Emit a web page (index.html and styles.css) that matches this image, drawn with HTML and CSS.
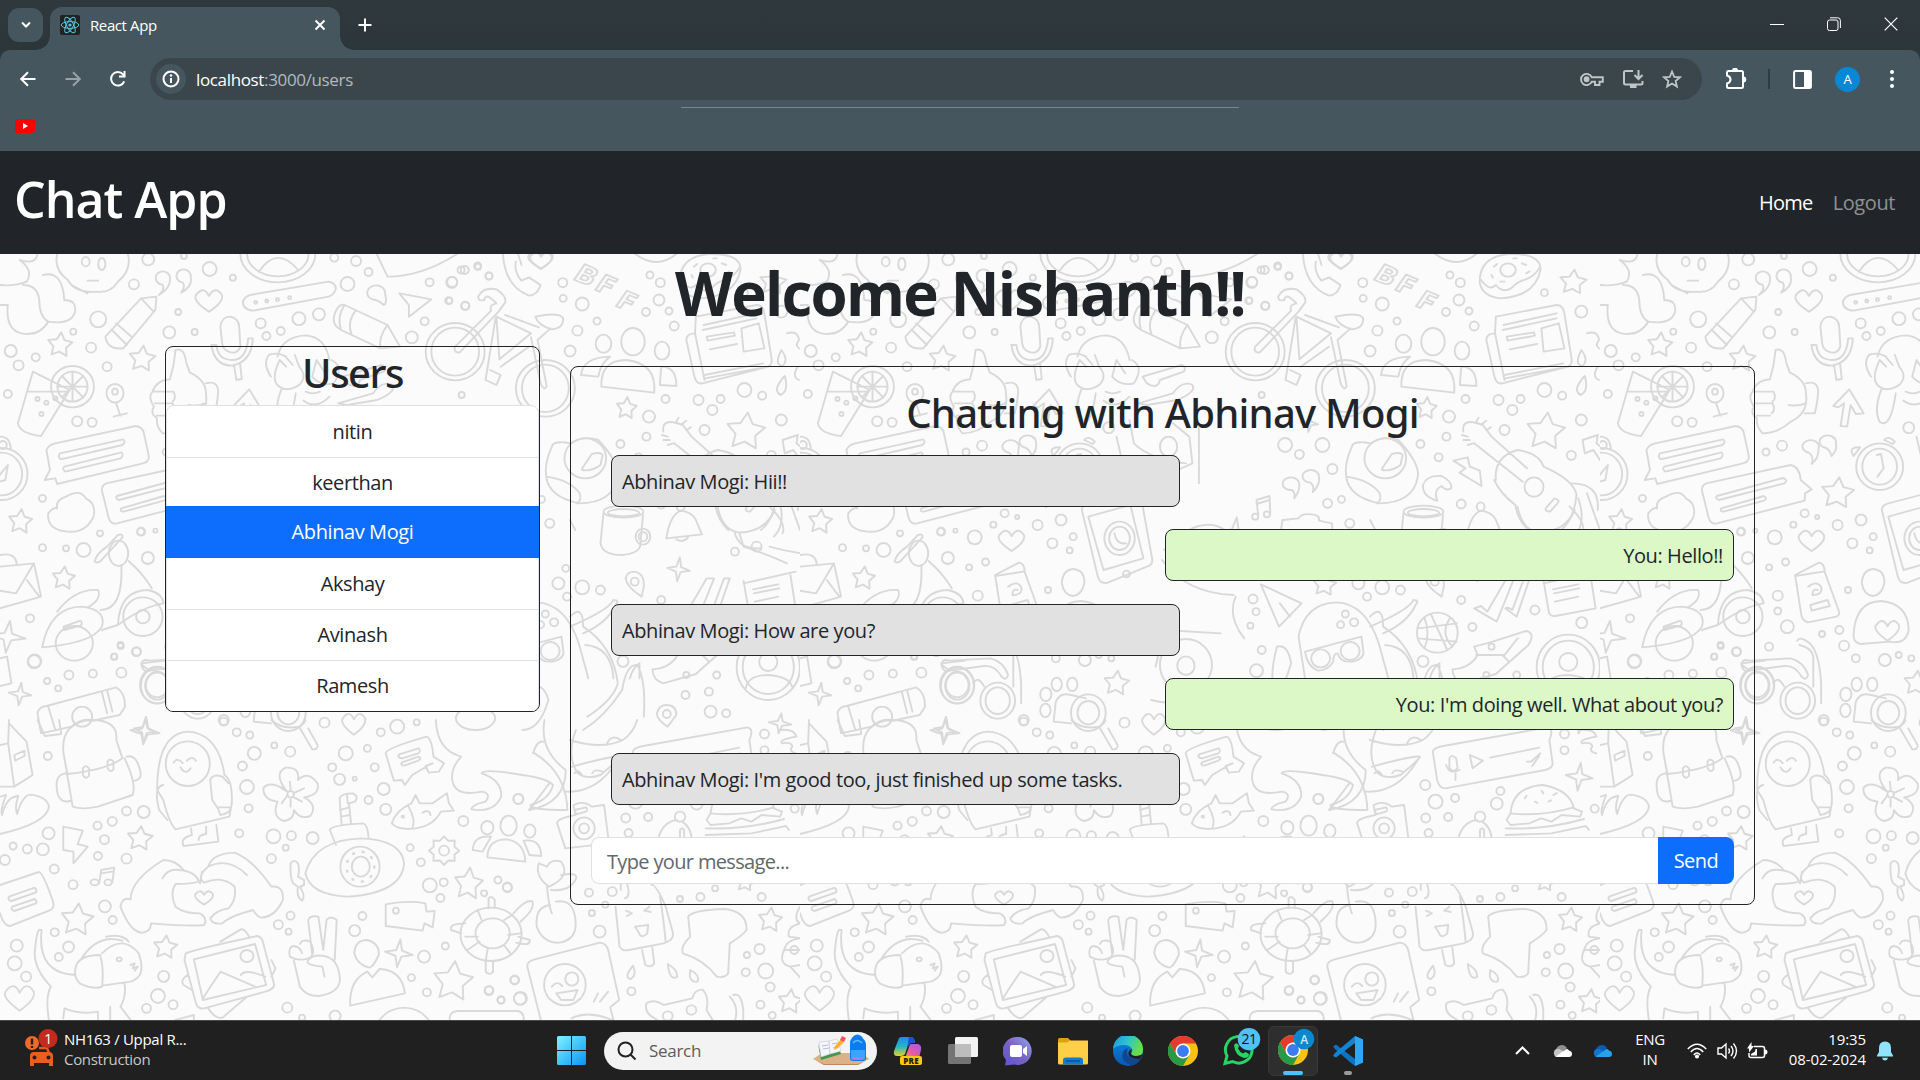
FILE: index.html
```html
<!DOCTYPE html>
<html lang="en">
<head>
<meta charset="utf-8">
<title>React App</title>
<link rel="stylesheet" href="styles.css">
</head>
<body>
<div class="screen">

<header class="chrome">
  <div class="tabstrip">
    <button class="tab-search"><svg width="14" height="10" viewBox="0 0 14 10"><path d="M3 2.5l4 4 4-4" class="w2"/></svg></button>
    <div class="tab">
      <svg class="favicon" width="20" height="20" viewBox="0 0 20 20"><rect width="20" height="20" rx="2" fill="#222"/><g fill="none" stroke="#58c4dc" stroke-width="1"><ellipse cx="10" cy="10" rx="8.8" ry="3.4"/><ellipse cx="10" cy="10" rx="8.8" ry="3.4" transform="rotate(60 10 10)"/><ellipse cx="10" cy="10" rx="8.8" ry="3.4" transform="rotate(120 10 10)"/></g><circle cx="10" cy="10" r="1.6" fill="#58c4dc"/></svg>
      <span class="tab-title">React App</span>
      <svg width="12" height="12" viewBox="0 0 12 12"><path d="M1.5 1.5l9 9M10.500 1.500l-9 9" class="w2"/></svg>
    </div>
    <svg class="newtab" width="14" height="14" viewBox="0 0 14 14"><path d="M7 .5v13M.5 7h13" class="w2"/></svg>
    <div class="winctl">
      <svg width="14" height="14" viewBox="0 0 14 14"><path d="M0 7.500h14" stroke="#fff"/></svg>
      <svg width="14" height="14" viewBox="0 0 14 14" fill="none" stroke="#fff"><rect x=".5" y="3" width="10.500" height="10.500" rx="2"/><path d="M3 .8h7.500a2.700 2.700 0 0 1 2.900 2.700v7.500"/></svg>
      <svg width="14" height="14" viewBox="0 0 14 14"><path d="M.7.7l12.600 12.600M13.300.7L.7 13.300" stroke="#fff" stroke-width="1.200"/></svg>
    </div>
  </div>
  <div class="toolbar">
    <div class="nav">
      <svg width="16" height="16" viewBox="0 0 16 16"><path d="M15.500 8H1.500M8 1.200L1.200 8 8 14.800" class="w2"/></svg>
      <svg class="dim" width="16" height="16" viewBox="0 0 16 16"><path d="M.5 8h14M8 1.200L14.800 8 8 14.800" class="w2"/></svg>
      <svg width="18" height="18" viewBox="0 0 18 18"><path d="M15.200 11.300A6.800 6.800 0 1 1 14 4.300L15.500 6" class="w2"/><path d="M16.500 1v6.500H10l0-2h4.500V1z" fill="#fff"/></svg>
    </div>
    <div class="omnibox">
      <span class="site-info"><svg width="18" height="18" viewBox="0 0 18 18"><circle cx="9" cy="9" r="7.500" class="w2"/><path d="M9 8v5" class="w2"/><circle cx="9" cy="5.500" r="1.200" fill="#fff"/></svg></span>
      <span class="url">localhost<i>:3000/users</i></span>
      <div class="omni-icons">
        <svg width="24" height="18" viewBox="0 0 24 18" fill="none" stroke="#c0c5c8" stroke-width="1.900"><path d="M11.800 7.300A5.600 5.600 0 1 0 11.800 11.700H15v3.300h4.500V11.700H22.800V7.300z"/><circle cx="6.600" cy="9.300" r="2" fill="#c0c5c8"/></svg>
        <svg width="22" height="20" viewBox="0 0 22 20" fill="none" stroke="#c0c5c8" stroke-width="2"><path d="M11 2H3.500Q2 2 2 3.500v10.500Q2 15.500 3.500 15.500h15.500Q20.500 15.500 20.500 14v-2M16.500 1v8M12.500 6l4 4 4-4"/><path d="M8 17.500h6.500" stroke-width="3"/></svg>
        <svg width="20" height="20" viewBox="0 0 20 20" fill="none" stroke="#c0c5c8" stroke-width="1.800"><path d="M10 2.500l2.200 5.300 5.700.5-4.300 3.700 1.300 5.600L10 14.600l-4.900 3 1.300-5.600L2.100 8.300l5.700-.5z"/></svg>
      </div>
    </div>
    <svg class="puzzle" width="22" height="22" viewBox="0 0 22 22"><path d="M2 4.500Q2 3 3.500 3H16.500Q18 3 18 4.500V18.500Q18 20 16.500 20H3.500Q2 20 2 18.500V15.500Q5.500 14.500 5.500 11.500T2 7.500z" class="w2"/><path d="M7 2.500a3 2.800 0 0 1 6 0zM18.500 8.500a2.800 3 0 0 1 0 6z" fill="#fff"/></svg>
    <i class="sep"></i>
    <svg class="panel-ico" width="19" height="19" viewBox="0 0 19 19"><rect x="1.100" y="1.100" width="16.800" height="16.800" rx="1.500" class="w2"/><path d="M11 1h7v17h-7z" fill="#fff"/></svg>
    <b class="avatar">A</b>
    <svg class="kebab" width="6" height="20" viewBox="0 0 6 20" fill="#fff"><circle cx="3" cy="3" r="2"/><circle cx="3" cy="10" r="2"/><circle cx="3" cy="17" r="2"/></svg>
  </div>
  <div class="bookmarks">
    <svg width="20" height="14" viewBox="0 0 20 14"><rect width="20" height="14" rx="3.500" fill="#f00"/><path d="M8 4v6l5-3z" fill="#fff"/></svg>
  </div>
  <i class="hairline"></i>
</header>

<nav class="navbar">
  <span class="brand">Chat App</span>
  <span class="links"><a class="active">Home</a><a>Logout</a></span>
</nav>

<main class="page">
  <svg class="doodles" viewBox="0 0 1920 766" width="1920" height="766">
    <symbol id="tile" viewBox="0 0 800 766">
      <g transform="matrix(.35714 0 0 .33333 0 -4)" data-k=".35714 .33333"
         data-dots="415 28 6;515 18 3;587 57 7;375 103 5;652 83 3;275 208 8;205 245 3;499 186 3;474 247 6;545 246 3;30 303 6;100 322 4;52 346 5;255 293 5;300 350 4.500;22 432 4;216 514 5;258 517 4.500;730 220 5;746 258 4;786 243 4;837 206 6.500;893 193 6;936 23 4;997 33 5;1032 66 4;973 102 7;1203 97 4;1265 97 5.500;1189 214 4;1153 262 6;1258 152 3;1303 167 4;1291 60 3.500;1338 50 3;1369 78 3.500;119 745 3.500;280 850 3;119 893 3.500;185 895 3;234 900 7;395 845 4;435 842 2;414 924 6;84 1105 4;97 1233 6.500;193 1275 4.500;260 1271 4;320 1220 3;338 1188 3;382 1205 4.500;340 1268 5;132 1293 3;163 1315 3;716 157 1.500;747 153 1.500;777 149 1.500;811 143 1.500;105 447 2;130 458 2;155 445 2;116 492 2"
         data-stars="168 285 36 38;398 327 38 40;57 815 34 38;178 985 33 36"
         data-sparks="22 1160 50 48;56 1332 32 34;405 1440 30 40"
         data-hearts="585 150 37 35;1515 30 30 27">
        <path d="M0 105Q40 110 75 95 95 60 55 30 100 45 105 12M0 165H22Q15 240 60 250 110 260 135 215 110 200 110 150 105 105 65 105M120 75Q175 60 180 150 215 150 210 185 200 225 135 215"/>
        <path d="M160 12Q150 60 190 90 210 130 270 125 310 130 330 95 370 60 358 12M200 105L245 130M245 92H275"/><ellipse cx="240" cy="35" rx="11" ry="14"/><ellipse cx="285" cy="42" rx="10" ry="18"/>
        <path d="M455 104A20 20 0 1 1 476 85Q478 115 445 135 463 118 455 104zM512 98A20 20 0 1 1 534 80Q540 110 507 128 520 112 512 98zM1052 150A25 22 0 1 1 1078 130Q1085 160 1075 165 1065 155 1052 150z"/>
        <path d="M295 260L395 145 438 140 435 180 345 295Q300 300 295 260zM395 145L430 185M325 220L370 262M312 238L355 285"/>
        <ellipse cx="778" cy="12" rx="105" ry="85"/><ellipse cx="778" cy="12" rx="86" ry="67"/><path d="M725 65Q775-15 835 60"/>
        <path d="M700 135L920 95Q942 100 940 118 935 135 920 140L710 182Q680 180 680 155 685 140 700 135z"/>
        <path d="M617 230Q620 200 645 200 670 205 670 235L673 290Q665 315 640 305 625 300 622 280zM592 285Q600 347 650 347 705 335 708 265H695Q690 330 650 330 610 330 606 285zM655 345L662 390 677 387 672 340"/>
        <path d="M935 200Q945 160 965 165L1085 225 1120 290 1065 295 955 240Q930 225 935 200zM965 165Q942 200 955 240M997 180Q970 215 985 255M1085 225Q1060 260 1065 295"/>
        <path d="M1055 12L1085 80Q1180 80 1280 12M1118 130L1208 148 1145 200V165z"/>
        <path d="M92 365L50 520Q55 550 115 558L195 420zM80 425H190"/><ellipse cx="203" cy="410" rx="60" ry="62"/><ellipse cx="203" cy="410" rx="42" ry="45"/><path d="M203 365V455M161 410H245M173 378L233 442M233 378L173 442"/>
        <ellipse cx="322" cy="430" rx="24" ry="28"/><ellipse cx="322" cy="425" rx="8" ry="9"/><path d="M325 460L337 497M318 500L355 490"/>
        <path d="M155 580L380 528Q400 530 403 550L417 620Q417 635 400 640L160 702 155 685 125 690 140 660 130 600Q135 585 155 580zM168 610L345 568Q353 577 343 585L170 628Q160 620 168 610zM180 650L340 607Q348 615 338 625L183 665Q173 657 180 650z"/>
        <ellipse cx="5" cy="672" rx="72" ry="78"/><ellipse cx="5" cy="672" rx="57" ry="64"/><path d="M-20 700L22 645 15 690zM0 560Q30 560 30 600"/><ellipse cx="8" cy="585" rx="11" ry="12"/>
        <path d="M185 740Q225 715 240 745 270 760 262 800 240 850 190 845 130 840 135 790 150 770 160 775 155 750 185 740"/>
        <path d="M265 935Q270 910 300 890L330 855Q345 850 343 862L280 935Q270 940 265 935zM340 945Q345 1080 282 1080M360 933Q400 970 425 1015M330 1125Q335 1020 415 1020 455 1030 458 1060 400 1070 330 1125zM118 1192Q140 1070 230 1070 300 1080 285 1130 260 1180 118 1192zM160 1085Q210 1015 275 1020 285 1050 245 1072M285 1140L330 1125M178 1130L225 1112Q233 1120 225 1127L180 1140z"/><ellipse cx="332" cy="910" rx="27" ry="38"/><ellipse cx="400" cy="1100" rx="55" ry="58"/><ellipse cx="400" cy="1100" rx="19" ry="20"/><ellipse cx="208" cy="1180" rx="52" ry="52"/>
        <path d="M0 950L95 940 115 1040 0 1075M95 940L45 1030 0 1022M75 990L110 1040M0 915Q45 905 47 945M0 1225L20 1220 32 1300 0 1308"/>
        <path d="M105 1390Q108 1370 130 1368L325 1312Q350 1325 350 1370L335 1395 260 1412Q232 1402 200 1430L115 1450zM135 1370L155 1440M285 1325L300 1390M300 1322L315 1385"/><ellipse cx="230" cy="1400" rx="28" ry="30"/>
        <path d="M395 1240L462 1232M395 1240Q400 1270 420 1262"/><ellipse cx="440" cy="1305" rx="48" ry="55"/><ellipse cx="440" cy="1305" rx="32" ry="37"/>
      </g>

      <g transform="matrix(.43367 0 0 .33333 -360 -4)" data-k=".43367 .33333"
         data-dots="1213 606 3.500;1250 587 5;1542 533 5.500;1302 790 4;1331 801 2;1276 824 3;1378 825 5;1432 810 5.500;1155 845 3.500;1233 862 7;1412 880 5;1460 860 3.500;1220 952 3;1258 936 3.500;1452 901 3;1240 1037 5;1402 1020 3;1240 1083 3.500;1262 1130 6.500;1342 1152 3;1382 1140 4;1220 1190 4;1393 1187 5;1420 1225 4;1487 1230 6;1519 1215 3;909 1235 6.500;1093 1220 3;1145 1205 4;1108 1185 3;1346 1410 5;1548 1225 3"
         data-stars="1378 730 39 48;1560 1300 30 38"
         data-hearts="1318 870 29 33;1493 1140 27 32">
        <path d="M1235 300Q1255 290 1260 340L1268 368Q1305 390 1305 430 1312 490 1270 515 1240 550 1205 550 1190 530 1192 505 1175 490 1185 470 1170 440 1182 425 1190 390 1222 388 1232 345 1235 300zM1305 400Q1335 390 1333 430 1330 470 1325 490L1302 490M1182 425H1230Q1238 442 1228 455M1187 460H1228Q1236 480 1226 490M1192 497H1222M1265 465Q1290 470 1303 460"/>
        <path d="M1368 468L1405 418 1438 490 1420 492 1408 465 1400 530 1385 528 1393 460 1380 472z"/>
        <path d="M1470 320Q1480 260 1535 256 1580 260 1590 330M1455 380Q1435 340 1450 315 1470 305 1490 320M1475 330L1490 350M1490 322L1505 345M1510 315L1520 350Q1540 380 1520 405 1490 430 1470 405 1455 385 1475 330M1480 415Q1460 480 1475 515 1500 540 1512 430M1535 425Q1550 435 1568 425M1595 330Q1625 350 1600 400 1570 410 1550 380L1560 330 1580 370M1530 452Q1560 480 1590 440"/>
        <path d="M1620 380L1710 345Q1722 350 1715 365L1660 390Q1655 420 1630 400zM1610 460L1690 430Q1712 390 1735 405 1745 425 1700 450L1630 465z"/>
        <path d="M1312 608A19 19 0 1 1 1334 595Q1335 625 1318 642 1325 620 1312 608zM1352 594A19 19 0 1 1 1374 578Q1378 600 1364 618 1362 604 1352 594z"/>
        <ellipse cx="1475" cy="650" rx="54" ry="70"/><ellipse cx="1475" cy="650" rx="40" ry="54"/><path d="M1468 615L1478 612 1484 655 1470 680M1410 605Q1410 590 1430 592L1415 618zM1485 570Q1495 555 1510 575L1505 582z"/>
        <path d="M1075 700L1270 645Q1290 650 1293 690L1318 718 1303 730 1302 752 1100 820Q1085 825 1080 800L1065 720Q1065 705 1075 700zM1100 738L1252 684Q1265 690 1255 700L1104 750Q1095 745 1100 738zM1110 775L1208 738Q1218 745 1208 752L1115 785Q1105 785 1110 775z"/>
        <path d="M1480 780Q1480 765 1495 760L1590 728Q1610 725 1617 745L1642 925Q1645 945 1630 950L1540 998Q1522 1003 1517 980zM1495 800L1592 765 1622 925 1530 960z"/><ellipse cx="1567" cy="865" rx="35" ry="50"/><ellipse cx="1567" cy="865" rx="24" ry="35"/><ellipse cx="1583" cy="972" rx="8" ry="10"/><path d="M1555 850Q1560 885 1582 880"/>
        <path d="M1280 975L1335 938Q1348 940 1348 965L1380 1080Q1385 1095 1375 1100L1310 1117Q1298 1112 1295 1100zM1280 978L1345 965M1315 1065L1355 1050 1360 1068 1318 1082zM1310 1010Q1330 990 1340 1010 1345 1035 1320 1035 1320 1015 1332 1020"/>
        <path d="M1460 957Q1487 960 1486 1000 1480 1035 1460 1038 1438 1035 1434 1000 1435 960 1460 957M1415 1150Q1420 1055 1478 1053 1540 1060 1542 1140 1535 1185 1500 1175L1430 1182Q1412 1175 1415 1150z"/>
        <path d="M1158 1245Q1155 1225 1175 1232L1270 1225Q1300 1235 1310 1275 1305 1295 1295 1280 1280 1245 1255 1248L1175 1262zM1285 1172Q1290 1160 1305 1172 1335 1190 1340 1300V1360M1322 1310V1220Q1320 1195 1290 1185M1230 1300Q1240 1275 1255 1310"/><ellipse cx="1193" cy="1307" rx="38" ry="54"/><ellipse cx="1193" cy="1307" rx="28" ry="42"/><ellipse cx="1286" cy="1352" rx="40" ry="54"/><ellipse cx="1286" cy="1352" rx="28" ry="40"/>
        <ellipse cx="1422" cy="1303" rx="12" ry="20"/><ellipse cx="1458" cy="1303" rx="12" ry="20"/><ellipse cx="1397" cy="1333" rx="13" ry="20"/><ellipse cx="1396" cy="1381" rx="12" ry="20"/><path d="M1420 1355Q1430 1325 1455 1335L1490 1345M1420 1355L1415 1415 1455 1420"/><ellipse cx="1495" cy="1388" rx="40" ry="55"/><ellipse cx="1495" cy="1388" rx="25" ry="35"/>
        <path d="M1590 510L1600 580Q1640 630 1720 640M1560 560L1585 700Q1640 720 1650 690L1735 640 1728 560 1690 520M1750 530V700"/><ellipse cx="1680" cy="590" rx="20" ry="30"/>
        <path d="M1670 900Q1750 790 1810 840M1665 930Q1720 1030 1830 1035M1650 1250L1670 1140 1800 1150M1640 1350Q1700 1370 1800 1350"/><ellipse cx="1720" cy="1245" rx="60" ry="78"/><ellipse cx="1720" cy="1247" rx="20" ry="28"/>
      </g>

      <g transform="matrix(.43367 0 0 .33333 440 -4)" data-k=".43367 .33333"
         data-dots="28 96 5;87 48 3.500;57 60 4;113 78 3.500;20 152 3.500;58 168 4;283 98 4.500;284 145 3.500;328 162 6.500;362 213 3.500;317 242 5;300 303 5.500;484 75 3.500;508 98 4.500;505 150 5.500;475 186 4;528 183 3.500;540 228 4.500;702 128 3.500;787 185 6;482 500 6;520 447 4;596 450 5;628 480 5;647 447 4;702 420 7;743 437 4;787 510 5.500;610 540 5;476 560 4;416 582 4;458 622 4;104 585 7;190 585 7;137 613 4.500;213 657 5;764 616 4.500;50 435 3;202 760 4.500;234 748 3.500;253 820 4.500;510 762 4.500;30 1047 4.500;37 1085 3.500;24 1127 3;50 1200 4;38 1262 6.500;293 1040 4;328 1012 7;370 1020 4.500;273 1000 6;510 1050 4;680 1080 4.500;788 1118 5.500;536 1131 4;422 1234 5.500;243 1092 3.500;232 1124 3.500;263 1117 4;638 1275 3.500;20 910 4;60 925 4;90 912 5.500;290 955 3.500;680 905 4;730 890 5;568 1275 3;566 1335 4;620 1325 4;624 1385 6;660 1390 4;580 1190 3"
         data-stars="768 97 32 38;705 545 46 58;430 475 24 34;195 1005 28 34"
         data-sparks="-12 850 38 48;160 520 20 26;550 958 26 36"
         data-hearts="232 28 28 28">
        <ellipse cx="35" cy="305" rx="68" ry="86"/><ellipse cx="35" cy="305" rx="55" ry="72"/><ellipse cx="243" cy="415" rx="68" ry="85"/><ellipse cx="243" cy="415" rx="54" ry="71"/>
        <path d="M35 290L118 182Q112 165 130 160 105 125 102 150 88 155 88 140 100 110 130 118 155 140 150 158L135 185 45 308Q30 308 35 290zM130 200L210 250 137 328zM128 205L105 390 130 405 140 375 115 360M150 195L228 232M210 262L232 400Q240 425 246 408L225 270 255 235M220 200Q275 185 284 205 285 235 258 238 225 225 220 200zM205 290L140 350"/>
        <path d="M145 12Q150 110 205 137 225 135 232 105L205 82 188 92Q170 65 175 35M188 45L180 12"/>
        <path d="M450 12Q500 60 545 12M553 100Q550 20 620 12 695 10 693 60 680 140 600 145 560 140 553 100zM556 90Q575 125 590 105 605 130 625 115 640 95 655 90 680 80 692 50"/><ellipse cx="618" cy="60" rx="18" ry="20"/><path d="M585 50l8-8M650 40l10 5M600 95h10M660 70l8-6M580 75l3 8M630 25h8"/>
        <text transform="translate(303 86) rotate(28)">B</text><text transform="translate(352 117) rotate(28)">F</text><text transform="translate(400 166) rotate(28)">F</text>
        <path d="M590 200L730 165Q745 165 748 190L765 330Q765 350 750 352L605 400Q590 405 585 370L568 270Q568 250 588 250zM588 250L610 390M608 225L730 190M606 240L730 205M615 260L678 247 680 257 617 272zM622 298L685 282M610 375L745 340M612 385L748 352M695 235L735 220 748 295 700 305z"/>
        <ellipse cx="377" cy="281" rx="18" ry="27"/><ellipse cx="445" cy="275" rx="27" ry="41"/><ellipse cx="512" cy="302" rx="17" ry="27"/><path d="M372 410Q370 330 430 330 500 340 494 428zM325 375Q330 322 392 320 370 340 365 380zM510 350Q545 350 545 408L507 405z"/>
        <path d="M800 250Q825 240 828 270 815 290 835 300M787 300Q805 330 790 348 770 345 787 300zM795 378Q805 425 785 435 765 420 795 378zM825 350Q810 380 828 390M790 570L825 555 822 580 840 600 835 640 815 600 795 610z"/>
        <path d="M515 545Q510 500 560 525L580 560 662 655M540 580L652 695M590 690Q585 620 640 600 690 610 700 650 770 690 776 735 770 810 740 840M586 690Q600 730 635 765 640 810 665 840M512 555L525 560M515 570H530M525 585L538 580M545 515L550 503M558 522L568 512M568 540L578 532M705 775L725 745Q740 750 732 760L715 785Q703 785 705 775z"/><ellipse cx="678" cy="711" rx="22" ry="29"/>
        <path d="M492 632L525 622 530 650 553 662 557 708 506 668 520 655z"/>
        <path d="M258 590Q260 570 302 580 330 555 365 570 415 640 410 680 400 760 320 760 250 740 245 680 240 640 258 590zM245 680Q300 690 322 730 328 750 315 760M328 655L350 612Q370 605 375 615L370 645Q350 665 328 660z"/><ellipse cx="335" cy="625" rx="48" ry="60"/>
        <path d="M120 720A19 19 0 1 1 136 698Q140 720 125 745 128 728 120 720zM163 698A19 19 0 1 1 182 680Q185 705 168 726 172 708 163 698zM42 795L38 750 68 738 70 790M38 762L68 750"/><ellipse cx="35" cy="800" rx="7" ry="9"/><ellipse cx="62" cy="793" rx="7" ry="9"/>
        <path d="M455 752Q420 740 422 705 430 675 465 678 490 695 487 715 475 725 465 708 445 720 455 752M765 700Q830 700 825 780M780 745Q800 820 770 860M800 730L830 840"/>
        <ellipse cx="423" cy="785" rx="46" ry="18"/><ellipse cx="423" cy="788" rx="36" ry="11"/><path d="M377 790L370 880Q375 915 420 915 460 910 462 885L468 795"/><ellipse cx="468" cy="860" rx="17" ry="24"/><ellipse cx="468" cy="860" rx="10" ry="14"/>
        <path d="M522 865Q530 795 555 782 580 785 590 810L604 853zM545 868Q560 880 572 862"/><ellipse cx="555" cy="770" rx="9" ry="13"/>
        <path d="M95 835L98 810 135 805Q140 790 165 793 185 795 182 812L212 820 215 870 110 880zM300 810L312 840"/>
        <path d="M640 770Q650 840 690 848 750 845 772 780M680 850Q690 900 740 895M690 848L700 890Q760 915 800 940M760 890Q800 905 860 915M760 770Q800 820 790 850"/>
        <path d="M448 965Q472 970 470 1010L465 1040Q430 1010 428 985 432 965 448 965z"/><ellipse cx="449" cy="995" rx="9" ry="12"/>
        <path d="M540 1075L556 1068 570 1085 615 985H632L592 1115zM612 1075Q618 1070 628 1080L655 985H668L638 1100zM700 1000L820 965M700 992L712 1085Q715 1100 728 1098L820 1075 808 975M722 1018L780 1003M724 1030L782 1015M726 1055L780 1040"/>
        <path d="M48 1003L142 1060 90 1130zM92 1060L115 1100"/>
        <path d="M150 1285L135 1160Q150 1060 222 1057 290 1060 320 1180L342 1285M300 1130Q390 1080 400 1050 415 1050 405 1065 385 1120 330 1150M335 1185Q395 1190 400 1285M150 1205L280 1160 285 1210Q280 1235 250 1235 230 1235 225 1210 215 1210 215 1235 205 1260 180 1262 155 1250 150 1205z"/><ellipse cx="186" cy="1225" rx="22" ry="27"/><ellipse cx="254" cy="1203" rx="22" ry="27"/>
        <ellipse cx="455" cy="1148" rx="47" ry="60"/><path d="M425 1103Q440 1150 425 1195M485 1103Q460 1150 490 1190M412 1135L500 1120M410 1165L500 1175M440 1092L478 1200"/>
        <path d="M490 1258Q530 1255 548 1215L540 1190 575 1178 660 1143Q682 1150 665 1185L590 1272 515 1300Q490 1290 490 1258zM545 1215L610 1215 640 1165M605 1215L620 1235"/>
        <ellipse cx="757" cy="1252" rx="73" ry="98"/><ellipse cx="757" cy="1252" rx="59" ry="80"/><ellipse cx="757" cy="1236" rx="21" ry="27"/><path d="M705 1315Q710 1275 757 1275 805 1280 812 1310"/>
        <path d="M85 1190Q110 1180 118 1240L95 1330Q60 1320 85 1190zM438 1285Q445 1250 460 1240V1285M-10 1040Q-30 1100 10 1165M300 1100Q330 1060 330 1130Q400 1190 410 1300Q400 1350 340 1400M330 1440Q380 1400 420 1320 430 1240 455 1245 475 1290 470 1400"/>
        <path d="M180 1300Q240 1290 250 1350 230 1440 190 1440M522 1365Q545 1365 545 1395L525 1430Q500 1410 500 1390 505 1365 522 1365z"/><ellipse cx="523" cy="1392" rx="9" ry="12"/>
      </g>

      <g transform="matrix(.40816 0 0 .33333 0 466)" data-k=".40816 .33333"
         data-dots="548 5 4;580 37 4;612 45 3.500;672 76 3;623 100 6.500;711 95 5;847 100 7;900 85 3.500;795 8 5;933 37 4;973 20 7;1021 7 3;117 108 4;594 138 4.500;605 201 7;609 265 4;814 142 4;918 142 4;832 178 5.500;869 176 2;940 207 6;903 240 4;945 268 5.500;310 273 4.500;352 276 6;239 317 4;275 304 4.500;119 340 6;256 359 4.500;240 408 4;310 416 5;32 378 3.500;67 387 4.500;105 388 6;12 420 5;133 447 4.500;179 494 4.500;257 559 6;276 600 4;586 340 4;670 349 7;714 347 4.500;766 354 6;700 383 3;665 416 4.500;1135 303 5;1270 237 5;1005 383 3.500;1031 427 4;1220 480 3.500;1243 501 4.500;1087 487 4;1053 496 7;1079 534 4;134 637 4;41 677 6;168 681 5.500;36 730 7;144 711 4;64 770 5;401 769 5.500;387 828 7;359 865 4.500;424 854 4.500;712 587 4;682 614 4.500;707 635 3;888 588 4;869 632 5.500;1091 678 3.500;1039 710 6;1008 773 3.500;1046 817 4;1261 780 4.500;1198 812 4.500;1275 835 6.500;1228 840 3.500;704 863 5;821 888 5.500;740 893 3"
         data-stars="343 356 32 38;189 600 41 50;405 682 30 36;1148 492 36 50;1110 785 50 62"
         data-sparks="355 35 36 38;977 700 34 42"
         data-cogs="1088 392 37 43"
         data-hearts="48 832 35 40;867 10 28 34;500 532 22 22">
        <path d="M92 0L110 48 150 42 145 0M155 95Q150 5 225 0 290 0 285 60L300 115Q260 150 165 162zM155 95L178 260Q200 270 240 260L325 225Q335 190 305 115M165 162L160 160Q130 165 142 225 150 250 172 243M310 110Q335 100 345 160 345 180 330 182M203 145Q210 132 218 145V168Q210 180 203 165zM263 125Q270 112 278 125V148Q270 160 264 145z"/>
        <path d="M0 75L20 70 35 200H0M20 70L22 0M22 10L65 65 80 165 35 200M35 105L60 92V108L37 122z"/>
        <path d="M0 230L15 225Q0 270 5 285 15 230 45 228 35 260 42 282 55 225 75 224 115 230 120 260 115 310 0 342"/>
        <path d="M385 210Q385 40 460 35 535 40 550 165 570 180 568 250L562 290 430 328Q415 310 400 240zM400 195Q375 200 390 270L410 300M515 180Q520 160 545 170L560 190M515 180L520 240 535 268 540 285Q565 280 565 262L535 262M468 325L470 345Q440 355 450 378L535 365 530 315M487 360Q485 345 505 342V320M425 128Q435 110 448 130M458 122Q470 105 480 122M442 142Q455 168 467 145"/><ellipse cx="460" cy="131" rx="54" ry="67"/>
        <path d="M700 210Q670 160 700 143 735 140 730 180 755 150 778 190 785 225 745 232 780 255 760 288 735 300 720 270 720 300 695 303 665 290 680 245 645 240 645 205 660 180 700 210zM703 228L690 250M705 215L690 205M712 208L710 185M722 218L745 205M720 232L740 245M712 238V260"/><ellipse cx="712" cy="223" rx="8" ry="10"/>
        <path d="M945 100Q945 85 1045 50 1058 55 1062 110L1088 130 1075 155 1050 158 1043 138 1060 130M1045 140L1010 165 992 195 985 180 965 182 945 100M978 103L1025 85Q1032 92 1025 100L985 115Q972 112 978 103zM985 127L1025 110Q1035 115 1025 122L990 137Q980 135 985 127z"/>
        <path d="M960 310Q970 270 1008 250L1018 225 1028 250H1060L1095 220 1100 250 1112 272 1080 275Q1060 325 1000 327 970 325 960 310zM1000 258Q1020 300 1010 325M1035 278Q1050 265 1055 285"/><circle cx="987" cy="290" r="3"/>
        <path d="M155 320L203 332 190 372 215 380 180 430V395L155 390zM243 490L248 450 280 443 275 488M248 460L278 454"/><ellipse cx="232" cy="487" rx="10" ry="9"/><ellipse cx="265" cy="487" rx="9" ry="9"/>
        <path d="M0 495L95 456Q105 456 130 545 135 565 120 572L25 618Q10 620 0 580M22 530L85 503Q92 510 88 517L28 543Q18 540 22 530zM30 560L85 537Q92 545 88 550L35 573Q25 570 30 560z"/>
        <path d="M398 475Q410 445 440 450 480 455 487 485 470 492 430 492 415 520 430 560 450 580 490 580 510 595 500 615 470 620 370 610 370 635 350 638 320 640 295 560 300 530 320 538 320 480 400 420 430 420 450 450M510 440Q520 400 575 398 620 420 665 500 695 495 693 540 675 590 640 593 630 590 620 570 560 590 545 610 520 615 515 595 530 570 560 565 580 540 575 500 545 465 500 488 480 470 510 440 560 410 605 465M495 455L490 490"/>
        <path d="M748 460Q770 360 885 355 985 360 990 430 985 520 850 530 760 525 748 460zM823 375L808 330Q810 315 890 310 900 312 903 352M837 315L832 235Q835 220 865 220 880 230 870 245L855 250 860 310M850 222L852 250M833 270L855 262M835 290L857 285M712 430Q720 415 730 430 735 450 730 470L745 480V495L735 500Q750 530 740 542 725 530 730 500L718 490Q710 470 712 430z"/><ellipse cx="882" cy="440" rx="48" ry="60"/><ellipse cx="884" cy="440" rx="22" ry="30"/><ellipse class="dotted" cx="883" cy="440" rx="34" ry="45"/>
        <ellipse cx="1088" cy="392" rx="12" ry="15"/>
        <ellipse cx="1194" cy="323" rx="15" ry="20"/><ellipse cx="1246" cy="317" rx="20" ry="30"/><ellipse cx="1298" cy="333" rx="14" ry="20"/><path d="M1194 412Q1195 358 1240 358 1285 365 1287 425zM1158 390Q1160 345 1203 350L1182 395zM1283 362Q1325 355 1326 408L1297 405z"/>
        <path d="M1068 0Q1070 90 1130 110 1100 150 1110 190 1120 230 1180 215 1205 220 1190 245 1155 255 1155 268 1210 280 1228 230 1230 180 1180 160 1185 145 1280 165 1340 175 1355 195 1345 240 1300 255 1295 270 1390 270 1388 160 1310 100 1330 25M1130 110Q1180 120 1240 105 1235 50 1250 0M1240 105Q1240 135 1285 160M1165 110Q1180 70 1202 108M1100 85Q1110 65 1132 95M1205 150Q1225 125 1240 160M1200 185Q1210 170 1225 195M1320 110Q1300 80 1322 65M1355 170Q1350 135 1370 140"/><ellipse cx="1165" cy="-5" rx="48" ry="35"/>
        <path d="M665 0Q690 30 735 20 750 5 748 0M735 25L765 88Q780 90 778 75L755 25"/>
        <path d="M1365 310Q1365 295 1410 285L1405 255Q1430 240 1450 260L1480 255 1492 370 1385 385zM1408 270L1435 262Q1442 268 1435 275L1412 283z"/><ellipse cx="1431" cy="325" rx="26" ry="33"/><ellipse cx="1431" cy="325" rx="12" ry="15"/>
        <path d="M1345 500Q1310 470 1320 430L1340 440Q1350 415 1375 425 1400 470 1345 500M1375 465Q1420 455 1410 480 1395 515 1350 510M1340 500Q1345 560 1352 580M1348 555Q1310 560 1315 620 1330 670 1370 668 1415 660 1410 600 1405 535 1362 545"/>
        <path d="M945 553Q1000 540 1042 550L1045 575 1065 573 1060 622 1040 610 1035 632 945 618z"/><ellipse cx="970" cy="572" rx="7" ry="9"/>
        <ellipse cx="1203" cy="643" rx="75" ry="80"/><ellipse cx="1207" cy="640" rx="42" ry="45"/><path d="M1197 565V535Q1205 525 1212 540V562M1258 580Q1290 535 1305 545 1310 570 1275 605M1270 650L1298 660Q1300 680 1265 668M1190 722V755Q1200 770 1208 755V722M1130 640L1105 630Q1100 610 1140 610M1180 600L1170 570M1140 650H1170M1145 690L1175 665M1195 685L1190 722M1235 675L1250 700M1245 645L1275 640M1235 600L1255 585"/>
        <path d="M100 630Q90 620 85 700 85 750 125 800 110 830 120 900M102 630Q90 760 185 765M250 700Q300 640 340 700 360 770 320 785L250 797M200 715Q240 640 300 662M260 650Q300 640 315 665M185 745Q190 705 245 705 255 740 250 800 230 810 195 790 180 770 185 745zM155 895L158 865Q200 885 240 875V900M305 790Q310 830 295 860L320 900M270 860V900M320 735L330 730 325 745 338 740 330 752"/><circle cx="292" cy="718" r="6"/>
        <path d="M455 700Q470 690 630 648 642 650 645 670L672 795Q670 808 650 815L500 865Q485 868 480 850L452 720zM475 718L625 672 652 795 497 840zM497 835L540 755 625 800M590 765Q600 745 650 770M540 665L590 628Q600 625 610 650M510 865Q530 900 545 893L605 830M460 765Q440 780 450 795L470 810M665 720L675 745 665 770"/><ellipse cx="605" cy="708" rx="16" ry="18"/>
        <path d="M765 705L755 600Q760 585 780 590L792 690 800 600Q810 585 825 600L820 720M755 715Q730 725 710 710 705 680 720 678 735 680 740 700M735 672Q740 655 760 665 775 700 758 715M720 722L735 800Q750 828 780 828 830 820 833 780 830 720 800 710 770 700 755 720 745 735 790 740L795 770"/>
        <path d="M868 700Q870 660 900 660 930 670 928 705 915 740 905 743 875 735 868 700zM858 857Q855 780 900 755L912 772 930 747Q985 750 992 820z"/>
        <path d="M1292 740Q1290 725 1310 718L1470 668Q1485 670 1490 690L1517 840 1495 862 1503 900M1292 740L1325 900M1400 895Q1440 870 1500 900M1352 800Q1365 780 1378 798M1363 820L1415 810 1405 840H1375zM1455 845L1465 820M1470 845L1490 815"/><ellipse cx="1384" cy="794" rx="51" ry="62"/><ellipse cx="1401" cy="777" rx="16" ry="20"/>
        <path d="M930 900Q950 865 990 863 1030 865 1050 900M1102 900Q1100 875 1120 873H1270Q1285 880 1283 900M430 900L475 885V900"/>
      </g>

      <g transform="matrix(.40816 0 0 .33333 480 466)" data-k=".40816 .33333"
         data-dots="94 237 5;697 42 4.500;697 91 4;356 195 5;381 245 7;429 234 4;540 213 4;531 251 6;357 294 4.500;412 291 4;364 339 4;771 266 4;10 520 3;67 503 4.500;267 518 4;324 515 4.500;307 554 3;293 635 6;274 579 3;490 537 3;540 531 4;576 505 3;690 531 4;685 687 5;654 705 3;700 753 7.500;651 757 4;711 801 4.500;687 854 4;716 886 3.500;85 780 4;22 811 4;98 836 6;51 840 3.500;371 814 4;770 690 4"
         data-stars="711 600 30 38;760 845 30 38;650 490 24 24" data-sparks="733 170 33 42;735 10 28 30">
        <path d="M375 100Q370 85 400 78L655 22Q672 25 660 60L668 130Q668 145 650 150L405 205Q390 205 385 180zM415 115Q420 100 432 115L435 145Q425 160 415 145zM407 135Q415 165 440 150M430 160V180M465 105L497 122 472 145zM515 113L635 83M605 125H615L638 100M618 138L635 108"/>
        <path d="M565 280Q570 200 645 195 710 210 720 265L740 275 735 290 690 285 665 305 640 295 610 310 565 315 555 300zM565 280Q640 290 720 262M553 325Q650 330 745 297M553 345L665 340 750 318 757 330M600 235l4-8M645 220l-4-8M670 225l8-6M625 245l6 4M658 245l6-4"/>
        <path d="M438 350Q450 305 482 300M495 305Q515 320 518 350M490 350V330Q495 320 500 330V350"/><ellipse cx="490" cy="290" rx="13" ry="15"/>
        <path d="M158 0Q145 90 210 150 210 250 120 270 170 190 170 190M235 30Q210 110 240 160 260 180 295 165 340 120 343 110 330 105 225 140M220 60Q300 90 350 60 375 40 385 0M210 215Q290 220 340 115M130 100Q140 60 155 65M310 75Q320 40 345 60M275 160Q280 145 300 155M232 160Q240 145 250 165"/>
        <path d="M735 30Q770 25 775 50 730 60 740 70 765 65 765 80 755 95 775 100"/>
        <path d="M332 560L342 680Q350 695 365 690L450 670Q475 660 473 640L455 560Q430 490 420 495M440 520Q450 600 455 665M397 690L405 735Q420 745 427 730L422 682M345 510V490M355 535Q370 530 360 490M358 572L372 580 360 588M415 560L402 572 418 576M380 620L412 615 410 640Q395 660 388 635z"/>
        <path d="M510 590Q520 570 600 567 655 575 653 630 640 650 612 670L608 760Q600 775 580 770 550 720 497 700 490 680 515 650z"/>
        <path d="M375 737Q385 765 370 777 350 775 375 737zM460 732Q485 750 483 770 465 785 460 732zM515 750Q540 765 533 785 510 790 515 750z"/>
        <path d="M784 560Q765 600 785 610 750 620 757 650L784 655Q750 660 745 690H784M745 690Q730 730 760 740L784 735M760 740L790 780"/>
        <path d="M435 900Q400 880 408 850 425 835 450 855L520 835Q525 810 545 808 562 830 555 870L570 900M620 825Q640 815 645 870V900M612 830Q635 860 625 900"/><ellipse cx="460" cy="888" rx="12" ry="14"/><ellipse cx="518" cy="870" rx="12" ry="14"/>
      </g>
    </symbol>
    <use href="#tile" x="0" width="800" height="766"/>
    <use href="#tile" x="800" width="800" height="766"/>
    <use href="#tile" x="1600" width="800" height="766"/>
  </svg>

  <div class="content">
    <h1>Welcome Nishanth!!</h1>
    <div class="columns">
      <section class="users">
        <h2>Users</h2>
        <ul>
          <li>nitin</li><li>keerthan</li><li class="active">Abhinav Mogi</li><li>Akshay</li><li>Avinash</li><li>Ramesh</li>
        </ul>
      </section>
      <section class="chat">
        <h2>Chatting with Abhinav Mogi</h2>
        <div class="messages">
          <p>Abhinav Mogi: Hii!!</p>
          <p class="mine">You: Hello!!</p>
          <p>Abhinav Mogi: How are you?</p>
          <p class="mine">You: I'm doing well. What about you?</p>
          <p>Abhinav Mogi: I'm good too, just finished up some tasks.</p>
        </div>
        <div class="composer"><span class="field">Type your message...</span><button>Send</button></div>
      </section>
    </div>
  </div>
</main>

<footer class="taskbar">
  <div class="widget">
    <svg width="34" height="40" viewBox="0 0 34 40"><circle cx="7" cy="15" r="7" fill="#f06a2a"/><path d="M7 10.500v6M7 18v2" stroke="#222" stroke-width="2.400"/><path d="M14 20h8l2 5" stroke="#e8581c" stroke-width="2.500" fill="none"/><path d="M5 28q0-4 4-4h15q4 0 4 4v10h-4v-3H9v3H5z" fill="#ee5d1d"/><circle cx="9.500" cy="29.500" r="2" fill="#222"/><circle cx="23.500" cy="29.500" r="2" fill="#222"/><circle cx="23" cy="10.500" r="9.500" fill="#c42b1c"/><text x="23" y="16" text-anchor="middle" class="badge-num">1</text></svg>
    <p>NH163 / Uppal R...<br><span>Construction</span></p>
  </div>
  <svg class="start" width="30" height="30" viewBox="0 0 30 30"><defs><linearGradient id="win" x2="1" y2="1"><stop stop-color="#7df4ff"/><stop offset="1" stop-color="#0a94f5"/></linearGradient></defs><path d="M1.500 0H14V14H0V1.500Q0 0 1.500 0zM15 0H27.500Q29 0 29 1.500V14H15zM0 15H14V29H1.500Q0 29 0 27.500zM15 15H29V27.500Q29 29 27.500 29H15z" fill="url(#win)"/></svg>
  <div class="search">
    <svg width="20" height="20" viewBox="0 0 20 20" fill="none" stroke="#222" stroke-width="2"><circle cx="8.500" cy="8.500" r="7"/><path d="M13.500 13.500l5 5"/></svg>
    <span>Search</span>
    <svg width="58" height="34" viewBox="0 0 58 34"><path d="M1 25L10 19H50L57 25 46 31H12z" fill="#dcb088"/><path d="M5 27L12 31H46L52 27 46 30H12z" fill="#b98a60"/><path d="M6 10L9 26 29 20 28 17 10 22z" fill="#3c9a4a"/><path d="M7 8L17 7 18 20 9 23zM17 7L25 5 29 17 18 20z" fill="#f6f6fa" stroke="#c9c9da" stroke-width=".6"/><path d="M10 12l6-1M11 15l6-1M20 10l5-1M21 14l5-1" stroke="#b9bcd2"/><path d="M23 12L29 5 32 8 26 14 22 16z" fill="#ffb02e"/><path d="M28 6L30 2 34 4 32 8z" fill="#f0545c"/><path d="M41 4Q45-1 50 4" fill="none" stroke="#1180e0" stroke-width="2"/><path d="M38 10Q38 2 45 2T54 10V24Q54 27 51 27H41Q38 27 38 24z" fill="#0d7cf0"/><path d="M41 9Q45 4 50 9" fill="none" stroke="#5ec0ff" stroke-width="1.500"/><path d="M39 16H53V24Q53 26 50 26H42Q39 26 39 24z" fill="#3aa4ff"/><path d="M40 23H52Q51 26 48 26H43Q40 26 40 23z" fill="#a77cf0"/></svg>
  </div>
  <div class="apps">
    <span class="app"><svg width="30" height="30" viewBox="0 0 30 30"><defs><linearGradient id="cp1" x2="0" y2="1"><stop stop-color="#2684f0"/><stop offset=".5" stop-color="#25b6c4"/><stop offset="1" stop-color="#e2d321"/></linearGradient><linearGradient id="cp2" x1="1" x2="0" y2="1"><stop stop-color="#a259ee"/><stop offset=".6" stop-color="#e85aa0"/><stop offset="1" stop-color="#ff9060"/></linearGradient></defs><path d="M6 2Q7 1 9 1H18Q21 1 22 6L17 7Q15 8 14 12L12 18Q11 20 8 20H4Q0 20 1 15z" fill="url(#cp1)"/><path d="M16 1H18Q21 1 22 7H18L14 12z" fill="#1452d8"/><path d="M18 8H25Q29 9 28 14L26 22H12L16 11Q17 8 18 8z" fill="url(#cp2)"/><rect x="7" y="20" width="22" height="9" rx="2" fill="#ffc90c"/><text x="18" y="27.500" text-anchor="middle" class="pre">PRE</text></svg></span>
    <span class="app"><svg width="30" height="30" viewBox="0 0 30 30"><rect x="0" y="8" width="23" height="20" rx="1.500" fill="#747474"/><rect x="7" y="1" width="23" height="20" rx="1.500" fill="#f3f3f3"/><path d="M7 8H23V21H7z" fill="#bdbdbd"/></svg></span>
    <span class="app"><svg width="30" height="30" viewBox="0 0 30 30"><defs><linearGradient id="tm" x1="1" x2="0" y2="1"><stop stop-color="#8fa7ee"/><stop offset=".5" stop-color="#7b62c4"/><stop offset="1" stop-color="#5a55d2"/></linearGradient></defs><path d="M15 1a14 14 0 1 1-4 27.500Q7 29 2 29.500L3 24A14 14 0 0 1 15 1z" fill="url(#tm)"/><rect x="7" y="9" width="12" height="12" rx="2" fill="#fff"/><path d="M20 13l4-3v10l-4-3z" fill="#fff"/></svg></span>
    <span class="app"><svg width="30" height="30" viewBox="0 0 30 30"><path d="M0 3.500Q0 2 1.500 2H10L13 5V9H0z" fill="#e0a012"/><path d="M0 6.500H9L12 4.500H30V27Q30 28.500 28.500 28.500H1.500Q0 28.500 0 27z" fill="#ffcf48"/><path d="M5 28.500V24Q5 21.500 8 21.500H22Q25 21.500 25 24V28.500z" fill="#0f7bd2"/><path d="M8 25H22" stroke="#0a4f94" stroke-width="1.500"/></svg></span>
    <span class="app"><svg width="30" height="30" viewBox="0 0 30 30"><defs><linearGradient id="ed" x2="1" y2=".4"><stop stop-color="#1c8fe0"/><stop offset=".5" stop-color="#2bc3d2"/><stop offset="1" stop-color="#66e04a"/></linearGradient><linearGradient id="ed2" x2="0" y2="1"><stop stop-color="#0d8ae0"/><stop offset="1" stop-color="#0a58b4"/></linearGradient></defs><circle cx="15" cy="15" r="15" fill="url(#ed2)"/><path d="M0 13A15 15 0 0 1 30 14Q30 20 23 20.500 18 20.500 18 17.500 20 16 19 13 17 9 11 9 4 9 0 13z" fill="url(#ed)"/><path d="M28 22Q20 25 15 20 13 16 15 12 9 14 9 20 11 28 19 29.500 25 28 28 22z" fill="#10478f"/><path d="M19 13Q17 17 19 19 23 21.500 30 18L27 23Q19 23 16 20 14 15 19 13z" fill="#202020"/></svg></span>
    <span class="app"><svg width="30" height="30" viewBox="0 0 30 30"><g id="chrome"><circle cx="15" cy="15" r="15" fill="#fbc116"/><path d="M2 7.500A15 15 0 0 1 28 7.500H15L8.500 18.800z" fill="#e33b2e"/><path d="M2 7.500L8.500 18.800 15 22.500 21.500 18.800 15 30A15 15 0 0 1 2 7.500z" fill="#2b9847"/><circle cx="15" cy="15" r="7.500" fill="#fff"/><circle cx="15" cy="15" r="5.900" fill="#3b7ded"/></g></svg></span>
    <span class="app"><svg width="40" height="38" viewBox="0 0 40 38"><path d="M2 35.500L4 28A13.300 13.300 0 1 1 9.500 33.500z" fill="none" stroke="#29d366" stroke-width="3"/><path d="M11 17q3-4 5 1l-1 2.500q2 4 5 5l2.500-1.500 3.500 2q0 4-5 4-9-2-10-13z" fill="#29d366"/><circle cx="26" cy="11.200" r="11.200" fill="#52c0f7"/><text x="26" y="16" text-anchor="middle" class="cnt">21</text></svg></span>
    <span class="app current"><svg width="40" height="38" viewBox="0 0 40 38"><use href="#chrome" y="7"/><circle cx="26" cy="11" r="10.300" fill="#0888cf"/><text x="26" y="15.500" text-anchor="middle" class="who">A</text></svg></span>
    <span class="app open"><svg width="30" height="30" viewBox="0 0 30 30"><path d="M22 0L30 3.500V26.500L22 30 18 27 2 13 0 10.500 3 8.500 22 23z" fill="#0b74c0"/><path d="M22 0L2 17 0 20 3 21.500 22 7z" fill="#1483d2"/><path d="M22 0L30 3.500V26.500L22 30z" fill="#2fa7f4"/></svg></span>
  </div>
  <div class="tray">
    <svg width="15" height="9" viewBox="0 0 15 9"><path d="M1 8l6.500-6.500L14 8" class="w2"/></svg>
    <svg class="cl1" width="20" height="14" viewBox="0 0 20 14"><path d="M4 6A6 6 0 0 1 15 4L10 9z" fill="#8f8f8f"/><path d="M4.500 13A4.500 4.500 0 0 1 4 5q3-1 5 1l6 4z" fill="#c4c4c4"/><path d="M3 13L13 6Q15 4 17 6.500 20 7 20 10T17 13H5Q2 13 1 11z" fill="#fff"/></svg>
    <svg class="cl2" width="20" height="14" viewBox="0 0 20 14"><path d="M4 6A6 6 0 0 1 15 4L10 9z" fill="#0a5cb4"/><path d="M4.500 13A4.500 4.500 0 0 1 4 5q3-1 5 1l6 4z" fill="#1076d4"/><path d="M3 13L13 6Q15 4 17 6.500 20 7 20 10T17 13H5Q2 13 1 11z" fill="#28a0ee"/></svg>
    <p class="lang">ENG<br>IN</p>
    <svg class="wifi" width="20" height="16" viewBox="0 0 20 16" fill="none" stroke="#fff" stroke-width="1.500"><path d="M.8 6Q10-3.500 19.200 6M3.800 9Q10 2 16.200 9M6.800 12Q10 8 13.200 12"/><circle cx="10" cy="13.500" r="1.300" fill="#fff"/></svg>
    <svg class="vol" width="21" height="18" viewBox="0 0 21 18" fill="none" stroke="#fff" stroke-width="1.400"><path d="M1 6h3.500L9 2v14l-4.500-4H1zM11.500 6.500q2 2.500 0 5M14 4q4 5 0 10M16.500 1.500q6 7.500 0 15"/></svg>
    <svg class="bat" width="21" height="18" viewBox="0 0 21 18"><path d="M7 4.500h8.500q2 0 2 2v7q0 2-2 2H4q-2 0-2-2V11" fill="none" stroke="#fff" stroke-width="1.500"/><path d="M18 7.500q2.500 0 2.500 2.500T18 12.500zM8.500 7H10v6.500H4V12l4-2.500z" fill="#fff"/><path d="M4.500 0v4H7L2 10.500V6.500H0z" fill="#fff"/></svg>
    <p class="clock">19:35<br>08-02-2024</p>
    <svg width="16" height="20" viewBox="0 0 16 20"><path d="M8 .5Q14 .5 14 7V11L16 14.500V15.500H0V14.500L2 11V7Q2 .5 8 .5zM5 16.800H11Q10.500 19.500 8 19.500T5 16.800z" fill="#8fe4fb"/></svg>
  </div>
</footer>
</div>
<script src="doodles.js"></script>
</body>
</html>
```
FILE: styles.css
```css
* { box-sizing: border-box; margin: 0; padding: 0; }
body { font-family: "Open Sans", "Noto Sans", sans-serif; font-size: 20px; letter-spacing: -.4px; color: #212529; }
svg { display: block; flex: none; }
button { font: inherit; letter-spacing: inherit; border: 0; color: #fff; }
ul { list-style: none; }
i { font-style: normal; }
.w2 { fill: none; stroke: #fff; stroke-width: 2; }
.screen { width: 1920px; height: 1080px; overflow: hidden; display: grid; grid-template-rows: 151px 103px 766px 60px; }

.chrome { position: relative; background: #2d373c; display: grid; grid-template-rows: 50px 59px 42px; color: #fff; }
.tabstrip { display: flex; align-items: flex-start; padding: 7px 22px 0 8px; background: linear-gradient(#2f383d, #2b363b); }
.tab-search { width: 35px; height: 34px; margin-top: 1px; border-radius: 11px; background: #45565f; display: grid; place-items: center; }
.tab { position: relative; margin-left: 7px; width: 290px; height: 43px; padding: 0 14px 16px 10px; border-radius: 12px 12px 0 0; background: #45565f; display: flex; align-items: center; }
.tab::before, .tab::after { content: ""; position: absolute; bottom: 0; width: 14px; height: 14px; }
.tab::before { left: -14px; background: radial-gradient(circle at 0 0, transparent 13.5px, #45565f 14px); }
.tab::after { right: -14px; background: radial-gradient(circle at 100% 0, transparent 13.5px, #45565f 14px); }
.tab svg, .tab-title { margin-top: 8px; }
.tab-title { font-size: 15px; margin-left: 10px; flex: 1; line-height: 20px; }
.newtab { margin: 11px 0 0 18px; }
.winctl { margin: 10px 0 0 auto; display: flex; gap: 43px; }
.toolbar { background: #45565f; border-radius: 10px 10px 0 0; display: flex; align-items: center; padding: 0 25px 0 20px; }
.toolbar > * { margin-top: -1px; }
.nav { display: flex; align-items: center; gap: 28.5px; width: 130px; }
.nav .dim { opacity: .45; }
.omnibox { width: 1552px; height: 42px; border-radius: 21px; background: #3a464c; display: flex; align-items: center; padding: 0 20px 0 6px; }
.site-info { width: 30px; height: 30px; border-radius: 50%; background: #45565f; display: grid; place-items: center; }
.url { font-size: 17px; margin-left: 10px; letter-spacing: -.35px; flex: 1; }
.url i { color: #b3babe; }
.omni-icons { display: flex; align-items: center; gap: 18px; }
.puzzle { margin-left: 23px; }
.sep { width: 2px; height: 20px; margin-left: 21px; background: #2f3b41; }
.panel-ico { margin-left: 23px; }
.avatar { margin-left: 23px; width: 25px; height: 25px; border-radius: 50%; background: #0888d4; font: 13px/25px "Open Sans", sans-serif; text-align: center; }
.kebab { margin-left: auto; }
.bookmarks { background: #45565f; padding: 10px 0 0 15px; }
.hairline { position: absolute; left: 681px; top: 107px; width: 558px; height: 1px; background: #78868d; }

.navbar { background: #212529; display: flex; align-items: center; padding: 0 25px 0 14px; color: #fff; }
.brand { font-size: 50px; font-weight: 600; letter-spacing: -1px; line-height: 1; padding-bottom: 7px; }
.links { margin-left: auto; display: flex; gap: 20px; }
.links a { color: #909294; }
.links .active { color: #fff; letter-spacing: -.7px; }

.page { display: grid; background: #fbfbfb; overflow: hidden; }
.doodles, .content { grid-area: 1 / 1; }
.doodles path, .doodles ellipse, .doodles circle { fill: none; stroke: #d9d9d9; stroke-width: 1.9; stroke-linejoin: round; stroke-linecap: round; vector-effect: non-scaling-stroke; }
.doodles text { font: 700 74px "Open Sans", sans-serif; fill: none; stroke: #d9d9d9; stroke-width: 4.5; letter-spacing: 0; }
.doodles .dotted { stroke-dasharray: 1 9; stroke-width: 2.5; }
.content { z-index: 1; }
h1 { font-size: 60px; font-weight: 700; letter-spacing: -1.75px; line-height: 72px; text-align: center; padding-top: 3px; height: 76px; }
h2 { font-family: "Noto Sans", "Open Sans", sans-serif; font-size: 40px; font-weight: 500; line-height: 48px; text-align: center; letter-spacing: -.75px; }
.columns { display: flex; align-items: flex-start; gap: 30px; padding: 16px 165px 0; }
.users { width: 375px; height: 366px; border: 1px solid #212529; border-radius: 8px; overflow: hidden; }
.users h2 { height: 58px; letter-spacing: -1.5px; padding-top: 2px; }
.users ul { border: 1px solid #dee2e6; border-radius: 8px; background: #fff; }
.users li { height: 50.8px; line-height: 50px; text-align: center; border-top: 1px solid #dee2e6; }
.users li:first-child { border-top: 0; line-height: 51px; }
.users .active { margin: -1.500px -1px 0; height: 52.3px; background: #0d6efd; border-color: #0d6efd; color: #fff; position: relative; }
.users .active + li { border-top-color: #fff; }
.chat { width: 1185px; height: 539px; margin-top: 20px; border: 1px solid #212529; border-radius: 8px; padding: 20px 20px 0; }
.chat h2 { padding-top: 2px; height: 51px; }
.messages { display: flex; flex-direction: column; gap: 22.400px; padding: 17px 0 0 20px; }
.messages p { width: 569px; height: 52px; line-height: 51px; padding: 0 10px; border: 1px solid #212529; border-radius: 8px; background: #e1e1e1; }
.messages .mine { align-self: flex-end; background: #dcf8c6; text-align: right; }
.composer { display: flex; height: 47px; margin-top: 32.400px; }
.field { flex: 1; background: #fff; border: 1px solid #dee2e6; border-right: 0; border-radius: 8px 0 0 8px; padding-left: 15px; line-height: 47px; color: #62676c; letter-spacing: -.65px; }
.composer button { width: 76px; background: #0d6efd; border-radius: 0 8px 8px 0; padding-top: 1px; letter-spacing: -.5px; }

.taskbar { background: #202020; border-top: 1px solid #434a4b; display: flex; align-items: center; color: #fff; font-size: 15px; line-height: 20px; letter-spacing: -.3px; }
.widget { width: 557px; padding-left: 25px; display: flex; align-items: center; gap: 5px; }
.widget svg { margin-top: -6px; }
.widget p { margin-top: -4px; }
.widget span { color: #c8c8c8; }
.search { margin-left: 17px; width: 273px; height: 38px; border-radius: 19px; background: #f3f3f3; display: flex; align-items: center; padding: 0 7px 0 13px; }
.search span { flex: 1; margin-left: 12px; font-size: 17px; color: #5c5c5c; }
.apps { display: flex; margin-left: 3px; }
.app { position: relative; width: 55px; height: 50px; display: grid; place-items: center; }
.app svg[width="40"] { margin: -8px 0 0 10px; }
.current::before { content: ""; position: absolute; inset: 0 2px 0 3px; border-radius: 6px; background: #2e2e2e; border: 1px solid #393939; }
.current svg { position: relative; }
.current::after, .open::after { content: ""; position: absolute; bottom: 1px; left: 18px; width: 20px; height: 4px; border-radius: 2px; background: #4cc2ff; }
.open::after { left: 24px; width: 8px; background: #9a9a9a; }
.badge-num { fill: #fff; font-size: 14px; }
.cnt { fill: #111; font-size: 14px; letter-spacing: -.5px; }
.who { fill: #cfe8f5; font-size: 12px; font-weight: 600; }
.pre { font-size: 8px; font-weight: 800; fill: #222; letter-spacing: .2px; }
.tray { margin-left: auto; padding-right: 27px; display: flex; align-items: center; }
.tray p { margin-top: -3px; }
.cl1 { margin-left: 22px; }
.cl2 { margin-left: 20px; }
.tray .lang { width: 30px; margin-left: 23px; text-align: center; }
.wifi { margin-left: 22px; }
.vol { margin-left: 10px; }
.bat { margin-left: 9px; }
.tray .clock { text-align: right; width: 78px; margin: -3px 11px 0 20px; letter-spacing: -.1px; }
```
FILE: doodles.js
```js
// Fills each wallpaper group with its small repeated shapes.
const NS = 'http://www.w3.org/2000/svg';
const rows = s => (s || '').split(';').filter(Boolean).map(r => r.trim().split(' ').map(Number));
const add = (g, tag, attrs) => {
  const el = document.createElementNS(NS, tag);
  for (const k in attrs) el.setAttribute(k, attrs[k]);
  g.appendChild(el);
};
const star = (x, y, rx, ry, tips, inner, turn) => {
  let d = '';
  for (let i = 0; i < tips * 2; i++) {
    const a = turn + i * Math.PI / tips - Math.PI / 2;
    const f = i % 2 ? inner : 1;
    d += (i ? 'L' : 'M') + (x + Math.cos(a) * rx * f).toFixed(1) + ' ' + (y + Math.sin(a) * ry * f).toFixed(1);
  }
  return d + 'z';
};
document.querySelectorAll('g[data-k]').forEach(g => {
  const [kx, ky] = g.dataset.k.split(' ').map(Number);
  rows(g.dataset.dots).forEach(([x, y, r]) => add(g, 'ellipse', { cx: x, cy: y, rx: r / kx, ry: r / ky }));
  rows(g.dataset.stars).forEach(([x, y, rx, ry]) => add(g, 'path', { d: star(x, y, rx, ry, 5, .52, .1) }));
  rows(g.dataset.sparks).forEach(([x, y, rx, ry]) => add(g, 'path', { d: star(x, y, rx, ry, 4, .3, .12) }));
  rows(g.dataset.cogs).forEach(([x, y, rx, ry]) => add(g, 'path', { d: star(x, y, rx, ry, 8, .74, 0) }));
  rows(g.dataset.hearts).forEach(([x, y, a, b]) => add(g, 'path', {
    d: `M${x} ${y + b}Q${x - a * 1.2} ${y + b * .1} ${x - a} ${y - b * .4}Q${x - a * .4} ${y - b * 1.3} ${x} ${y - b * .35}Q${x + a * .5} ${y - b * 1.3} ${x + a} ${y - b * .4}Q${x + a * 1.1} ${y + b * .2} ${x} ${y + b}z`
  }));
});
```
